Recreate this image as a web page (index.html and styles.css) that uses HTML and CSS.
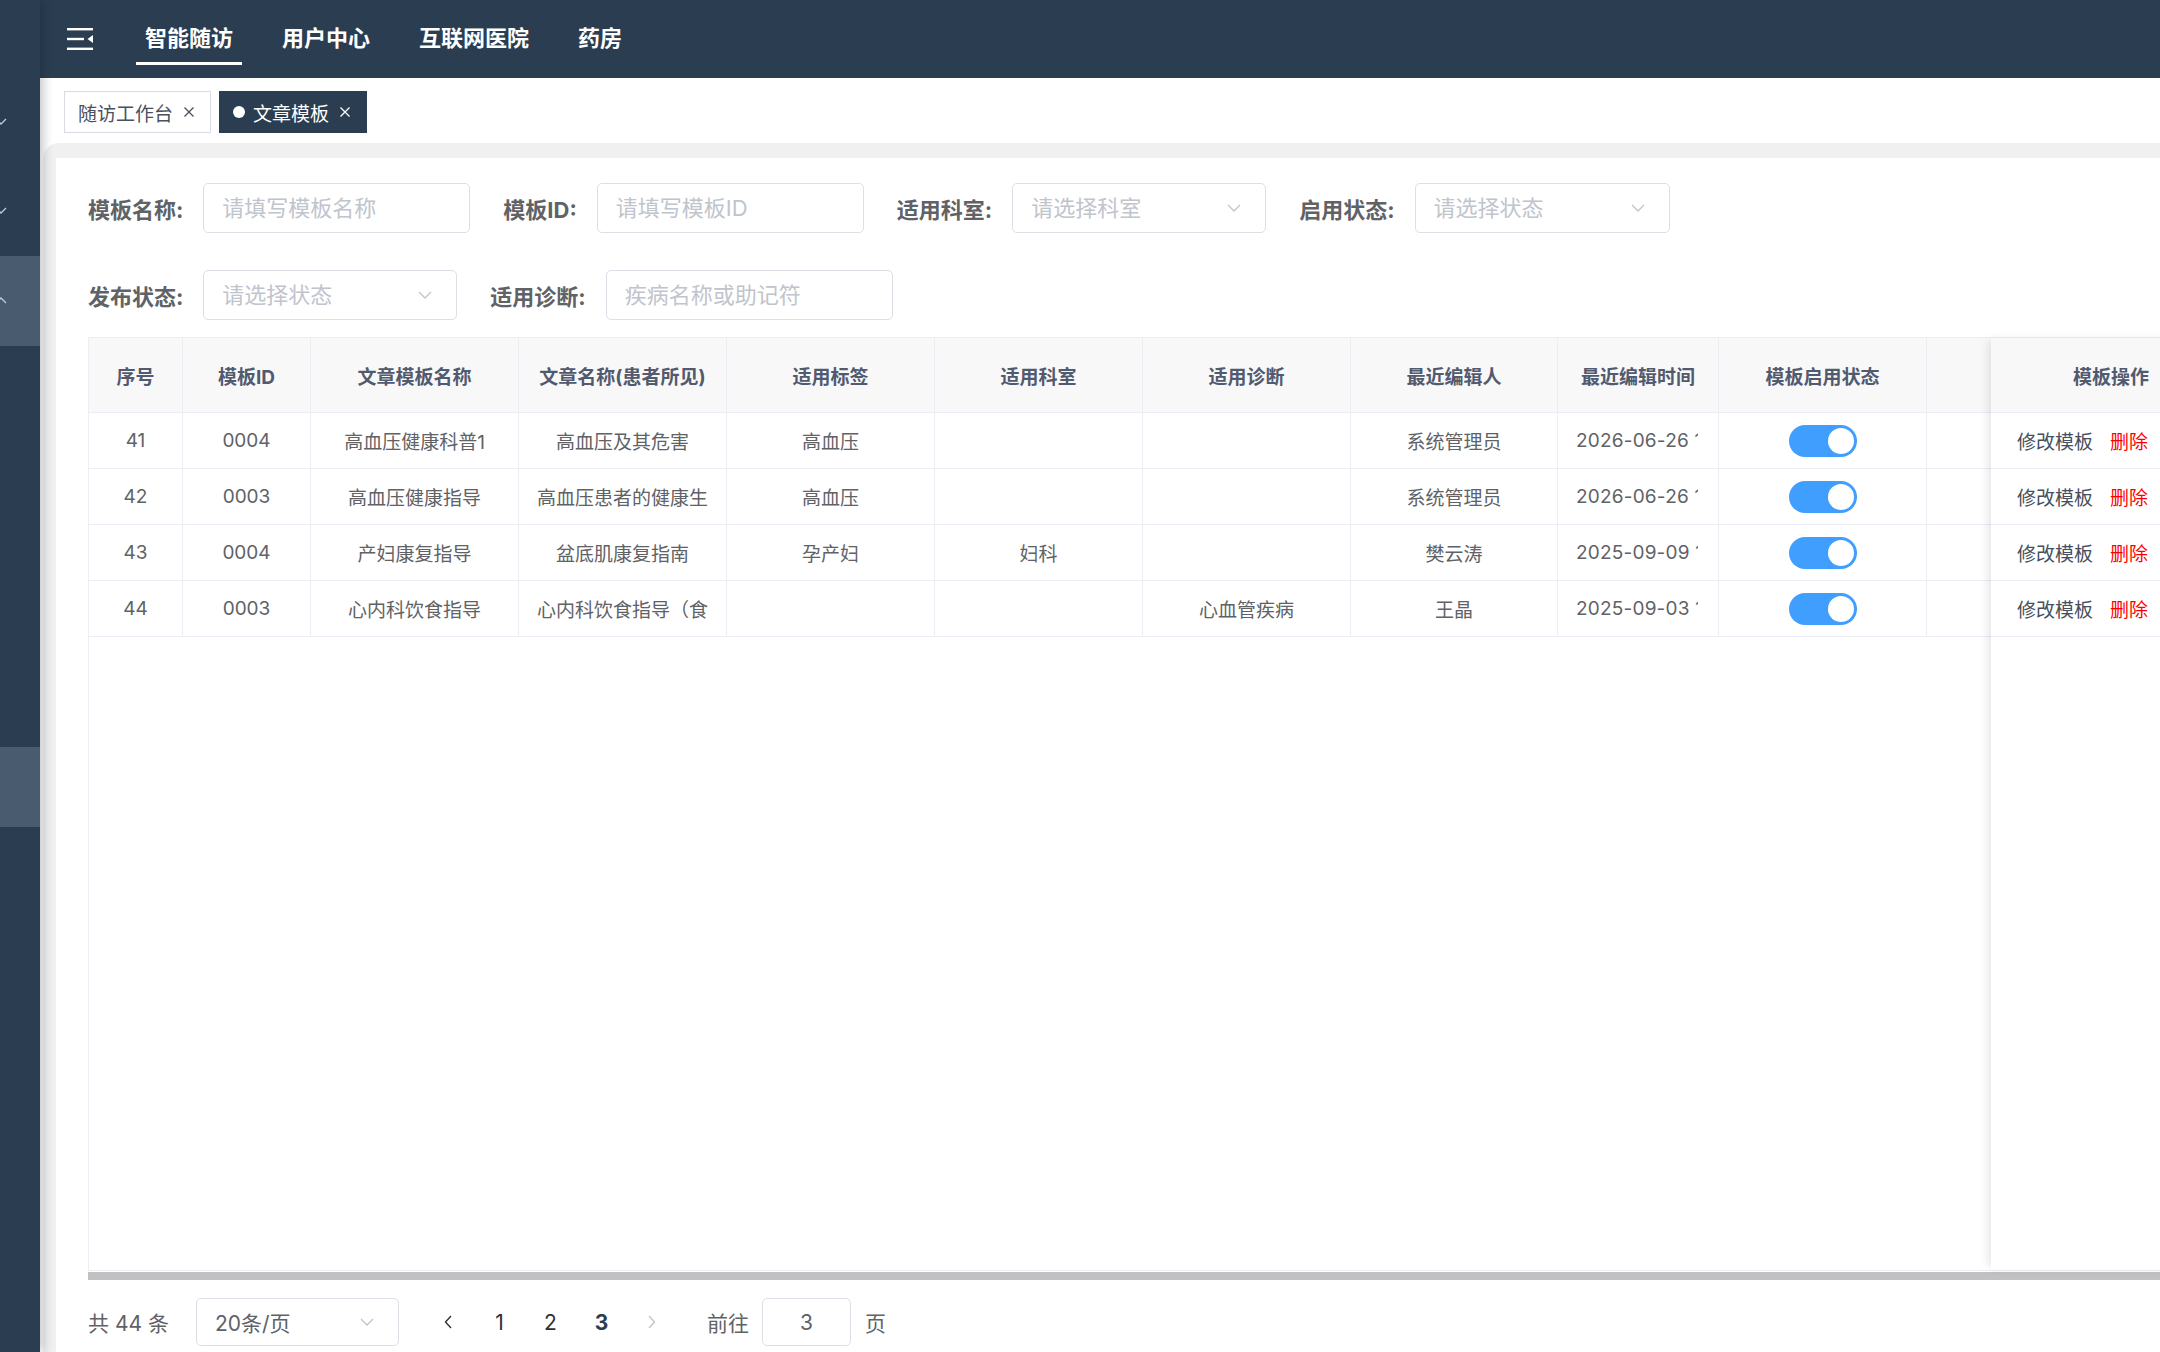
FILE: index.html
```html
<!DOCTYPE html>
<html lang="zh-CN">
<head>
  <meta charset="UTF-8">
  <title>文章模板</title>
  <link rel="stylesheet" href="styles.css">
</head>
<body>
<div class="layout">

  <aside class="sidebar">
    <div class="side-top"></div>
    <div class="side-item first">
      <svg width="8" height="10" viewBox="0 0 8 10"><path d="M-2 4L1 7L6 2" fill="none" stroke="#bfcbd9" stroke-width="1.3"/></svg>
    </div>
    <div class="side-item">
      <svg width="8" height="10" viewBox="0 0 8 10"><path d="M-2 4L1 7L6 2" fill="none" stroke="#bfcbd9" stroke-width="1.3"/></svg>
    </div>
    <div class="side-item active">
      <svg width="8" height="10" viewBox="0 0 8 10"><path d="M-2 5L1 2L6 7" fill="none" stroke="#bfcbd9" stroke-width="1.3"/></svg>
    </div>
    <div class="side-item tail active"></div>
  </aside>

  <div class="main">
    <header class="navbar">
      <div class="hamburger">
        <svg width="26" height="24" viewBox="0 0 26 24">
          <rect x="0" y="1" width="26" height="2.4" fill="#fff"/>
          <rect x="0" y="10.8" width="17" height="2.4" fill="#fff"/>
          <rect x="0" y="20.6" width="26" height="2.4" fill="#fff"/>
          <path d="M26 8L20.5 12L26 16Z" fill="#fff"/>
        </svg>
      </div>
      <nav class="top-menu">
        <a href="#" class="active">智能随访</a>
        <a href="#">用户中心</a>
        <a href="#">互联网医院</a>
        <a href="#">药房</a>
      </nav>
    </header>

    <div class="tags">
      <span class="tag">随访工作台
        <svg class="tag-close" width="12" height="12" viewBox="0 0 12 12"><path d="M1.5 1.5L10.5 10.5M10.5 1.5L1.5 10.5" stroke="currentColor" stroke-width="1.3"/></svg>
      </span>
      <span class="tag active"><i class="tag-dot"></i>文章模板
        <svg class="tag-close" width="12" height="12" viewBox="0 0 12 12"><path d="M1.5 1.5L10.5 10.5M10.5 1.5L1.5 10.5" stroke="currentColor" stroke-width="1.3"/></svg>
      </span>
    </div>

    <div class="app-main">
      <div class="card">

        <form class="filter">
          <div class="filter-row">
            <div class="form-item">
              <label>模板名称:</label>
              <div class="el-input input-name"><input placeholder="请填写模板名称"></div>
            </div>
            <div class="form-item">
              <label>模板ID:</label>
              <div class="el-input input-id"><input placeholder="请填写模板ID"></div>
            </div>
            <div class="form-item">
              <label>适用科室:</label>
              <div class="el-input select-dept"><input placeholder="请选择科室">
                <svg width="14" height="8" viewBox="0 0 14 8"><path d="M1 1l6 6 6-6" fill="none" stroke="#c0c4cc" stroke-width="1.3"/></svg>
              </div>
            </div>
            <div class="form-item">
              <label>启用状态:</label>
              <div class="el-input select-enable"><input placeholder="请选择状态">
                <svg width="14" height="8" viewBox="0 0 14 8"><path d="M1 1l6 6 6-6" fill="none" stroke="#c0c4cc" stroke-width="1.3"/></svg>
              </div>
            </div>
          </div>
          <div class="filter-row last">
            <div class="form-item">
              <label>发布状态:</label>
              <div class="el-input select-publish"><input placeholder="请选择状态">
                <svg width="14" height="8" viewBox="0 0 14 8"><path d="M1 1l6 6 6-6" fill="none" stroke="#c0c4cc" stroke-width="1.3"/></svg>
              </div>
            </div>
            <div class="form-item">
              <label>适用诊断:</label>
              <div class="el-input input-diag"><input placeholder="疾病名称或助记符"></div>
            </div>
          </div>
        </form>

        <div class="table-box">
          <div class="table-main">
            <table class="grid">
              <colgroup>
                <col style="width:94px"><col style="width:128px"><col style="width:208px"><col style="width:208px">
                <col style="width:208px"><col style="width:208px"><col style="width:208px"><col style="width:207px">
                <col style="width:161px"><col style="width:208px"><col style="width:64px">
              </colgroup>
              <thead>
                <tr>
                  <th>序号</th><th>模板ID</th><th>文章模板名称</th><th>文章名称(患者所见)</th><th>适用标签</th>
                  <th>适用科室</th><th>适用诊断</th><th>最近编辑人</th><th>最近编辑时间</th><th>模板启用状态</th><th class="col-end"></th>
                </tr>
              </thead>
              <tbody>
                <tr>
                  <td>41</td><td>0004</td><td>高血压健康科普1</td><td>高血压及其危害</td><td>高血压</td>
                  <td></td><td></td><td>系统管理员</td><td class="date"><div class="clip">2026-06-26 10:32:18</div></td>
                  <td><span class="switch"><i></i></span></td><td class="col-end"></td>
                </tr>
                <tr>
                  <td>42</td><td>0003</td><td>高血压健康指导</td><td><div class="clip">高血压患者的健康生活方式</div></td><td>高血压</td>
                  <td></td><td></td><td>系统管理员</td><td class="date"><div class="clip">2026-06-26 10:25:41</div></td>
                  <td><span class="switch"><i></i></span></td><td class="col-end"></td>
                </tr>
                <tr>
                  <td>43</td><td>0004</td><td>产妇康复指导</td><td>盆底肌康复指南</td><td>孕产妇</td>
                  <td>妇科</td><td></td><td>樊云涛</td><td class="date"><div class="clip">2025-09-09 16:08:52</div></td>
                  <td><span class="switch"><i></i></span></td><td class="col-end"></td>
                </tr>
                <tr>
                  <td>44</td><td>0003</td><td>心内科饮食指导</td><td><div class="clip">心内科饮食指导（食谱推荐）</div></td><td></td>
                  <td></td><td>心血管疾病</td><td>王晶</td><td class="date"><div class="clip">2025-09-03 14:47:05</div></td>
                  <td><span class="switch"><i></i></span></td><td class="col-end"></td>
                </tr>
              </tbody>
            </table>
          </div>
          <div class="table-fixed">
            <table class="grid">
              <thead>
                <tr><th>模板操作</th></tr>
              </thead>
              <tbody>
                <tr><td class="ops"><a href="#" class="op-edit">修改模板</a><a href="#" class="op-del">删除</a></td></tr>
                <tr><td class="ops"><a href="#" class="op-edit">修改模板</a><a href="#" class="op-del">删除</a></td></tr>
                <tr><td class="ops"><a href="#" class="op-edit">修改模板</a><a href="#" class="op-del">删除</a></td></tr>
                <tr><td class="ops"><a href="#" class="op-edit">修改模板</a><a href="#" class="op-del">删除</a></td></tr>
              </tbody>
            </table>
          </div>
        </div>
        <div class="hscroll"></div>

        <div class="pagination">
          <span class="total">共 44 条</span>
          <div class="el-input page-size"><span class="value">20条/页</span>
            <svg width="14" height="8" viewBox="0 0 14 8"><path d="M1 1l6 6 6-6" fill="none" stroke="#c0c4cc" stroke-width="1.3"/></svg>
          </div>
          <ul class="pager">
            <li><svg width="8" height="14" viewBox="0 0 8 14"><path d="M7 1L1.5 7L7 13" fill="none" stroke="currentColor" stroke-width="1.4"/></svg></li>
            <li>1</li>
            <li>2</li>
            <li class="current">3</li>
            <li class="disabled"><svg width="8" height="14" viewBox="0 0 8 14"><path d="M1 1L6.5 7L1 13" fill="none" stroke="currentColor" stroke-width="1.4"/></svg></li>
          </ul>
          <span class="jumper">前往<span class="el-input jump-input">3</span>页</span>
        </div>

      </div>
    </div>
  </div>
</div>
</body>
</html>
```

FILE: styles.css
```css
* {
  box-sizing: border-box;
}

body {
  margin: 0;
  width: 2160px;
  height: 1352px;
  overflow: hidden;
  font-family: Inter, "Noto Sans CJK SC", sans-serif;
  color: #606266;
  background: #fff;
}

.layout {
  display: flex;
  height: 100%;
}

/* sidebar (collapsed) */
.sidebar {
  width: 40px;
  flex-shrink: 0;
  background: #2b3d51;
  display: flex;
  flex-direction: column;
  position: relative;
  z-index: 2;
  box-shadow: 3px 0 10px rgba(0, 21, 41, 0.25);
}

.side-top {
  height: 77px;
}

.side-item {
  height: 90px;
  display: flex;
  align-items: center;
}

.side-item.first {
  height: 89px;
}

.side-item.active {
  background: #485b6f;
}

.side-item.tail {
  height: 80px;
  margin-top: 401px;
}

.side-item svg {
  display: block;
}

.main {
  flex: 1;
  min-width: 0;
  display: flex;
  flex-direction: column;
}

/* top navbar */
.navbar {
  height: 78px;
  background: #2b3d51;
  display: flex;
  align-items: center;
  padding-left: 27px;
}

.hamburger svg {
  display: block;
}

.top-menu {
  display: flex;
  gap: 31px;
  height: 100%;
  margin-left: 43px;
}

.top-menu a {
  position: relative;
  display: flex;
  align-items: center;
  padding: 0 9px 6px;
  color: #fff;
  font-size: 22px;
  font-weight: 600;
  text-decoration: none;
}

.top-menu a.active::after {
  content: "";
  position: absolute;
  left: 0;
  right: 0;
  bottom: 13px;
  height: 3px;
  background: #fff;
}

/* tags view */
.tags {
  height: 65px;
  padding: 13px 0 0 24px;
  display: flex;
  align-items: flex-start;
  gap: 8px;
  background: #fff;
}

.tag {
  height: 42px;
  display: flex;
  align-items: center;
  padding: 0 15px 0 13px;
  border: 1px solid #d8dce5;
  color: #495060;
  font-size: 19px;
}

.tag-close {
  margin-left: 10px;
}

.tag.active {
  background: #2b3d51;
  border-color: #2b3d51;
  color: #fff;
}

.tag-dot {
  width: 12px;
  height: 12px;
  border-radius: 50%;
  background: #fff;
  margin-right: 8px;
}

/* content */
.app-main {
  flex: 1;
  min-height: 0;
  display: flex;
  margin-left: 3px;
  padding: 15px 0 0 13px;
  background: #f0f0f0;
  border-top-left-radius: 16px;
}

.card {
  flex: 1;
  min-width: 0;
  overflow: hidden;
  background: #fff;
  padding: 25px 0 0 32px;
}

/* filter form */
.filter {
  margin: 0;
}

.filter-row {
  display: flex;
  align-items: center;
  margin-bottom: 37px;
}

.filter-row.last {
  margin-bottom: 17px;
}

.form-item {
  display: flex;
  align-items: center;
  margin-right: 33px;
}

.form-item label {
  padding-right: 20px;
  font-size: 22px;
  font-weight: 700;
  color: #606266;
}

.el-input {
  height: 50px;
  display: flex;
  align-items: center;
  padding: 0 24px 0 18px;
  border: 1px solid #dcdfe6;
  border-radius: 5px;
  background: #fff;
}

.el-input input {
  width: 100%;
  padding: 0;
  border: 0;
  outline: 0;
  background: transparent;
  font: inherit;
  font-size: 22px;
  color: #606266;
}

.el-input input::placeholder {
  color: #c0c4cc;
}

.el-input svg {
  flex-shrink: 0;
}

.input-name,
.input-id {
  width: 267px;
}

.select-dept,
.select-publish {
  width: 254px;
}

.select-enable {
  width: 255px;
}

.input-diag {
  width: 287px;
}

/* table */
.table-box {
  height: 934px;
  display: flex;
  border: 1px solid #ebeef5;
  border-right: 0;
}

.table-main {
  width: 1902px;
  flex-shrink: 0;
}

.grid {
  width: 100%;
  table-layout: fixed;
  border-collapse: separate;
  border-spacing: 0;
}

.grid th,
.grid td {
  padding: 0 18px;
  border-right: 1px solid #ebeef5;
  border-bottom: 1px solid #ebeef5;
  text-align: center;
  font-size: 19px;
  white-space: nowrap;
}

.grid th {
  height: 75px;
  background: #f8f8f9;
  color: #515a6e;
  font-weight: 700;
}

.grid td {
  height: 56px;
  color: #606266;
}

.grid td.date {
  padding-right: 20px;
  letter-spacing: 0.2px;
}

.grid .col-end {
  border-right: 0;
}

.clip {
  overflow: hidden;
  text-align: left;
}

.switch {
  width: 68px;
  height: 32px;
  display: inline-flex;
  justify-content: flex-end;
  align-items: center;
  padding: 0 3px;
  border-radius: 16px;
  background: #409eff;
  vertical-align: middle;
}

.switch i {
  width: 26px;
  height: 26px;
  border-radius: 50%;
  background: #fff;
}

.table-fixed {
  width: 240px;
  flex-shrink: 0;
  background: #fff;
  box-shadow: -5px 0 10px -3px rgba(0, 0, 0, 0.12);
}

.table-fixed .grid th,
.table-fixed .grid td {
  border-right: 0;
}

.grid td.ops {
  text-align: left;
  padding-left: 26px;
}

.ops a {
  text-decoration: none;
}

.op-edit {
  color: #454f60;
  margin-right: 17px;
}

.op-del {
  color: #ff0000;
}

.hscroll {
  height: 8px;
  margin-top: 1px;
  background: #c1c1c1;
}

/* pagination */
.pagination {
  height: 48px;
  margin-top: 18px;
  display: flex;
  align-items: center;
  font-size: 21px;
  color: #606266;
}

.total {
  margin-right: 27px;
}

.page-size {
  width: 203px;
  height: 48px;
  justify-content: space-between;
  font-size: 21px;
}

.pager {
  display: flex;
  margin: 0 0 0 24px;
  padding: 0;
  list-style: none;
}

.pager li {
  width: 51px;
  display: flex;
  justify-content: center;
  align-items: center;
  color: #303133;
}

.pager li.current {
  color: #2b3d51;
  font-weight: 700;
}

.pager li.disabled {
  color: #c0c4cc;
}

.jumper {
  display: flex;
  align-items: center;
  margin-left: 29px;
}

.jump-input {
  width: 89px;
  height: 48px;
  margin: 0 14px 0 13px;
  padding: 0;
  justify-content: center;
  color: #606266;
}
```
